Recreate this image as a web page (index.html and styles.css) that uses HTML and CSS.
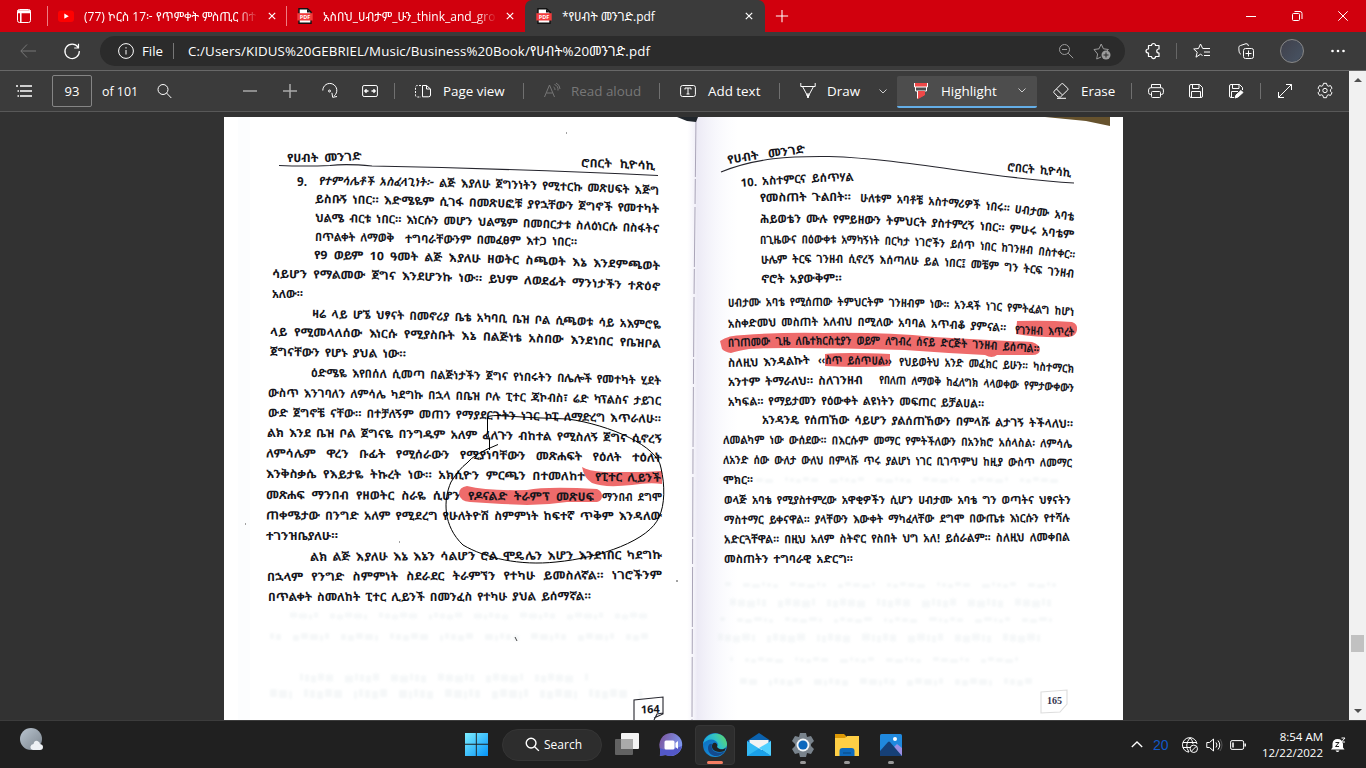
FILE: index.html
```html
<!DOCTYPE html>
<html lang="am">
<head>
<meta charset="utf-8">
<title>*የሀብት መንገድ.pdf</title>
<link rel="stylesheet" href="styles.css">
</head>
<body>
<div class="screen">
<header class="tabs">
  <svg class="ic tabmenu" viewBox="0 0 16 16"><rect x="1.5" y="1.5" width="13" height="13" rx="2"/><path d="M1.5 3h13M1.5 4.6h13M4.8 4v10.5" stroke-width="1.5"/></svg>
  <i class="tabsep"></i>
  <div class="tab first">
    <svg class="fav" viewBox="0 0 16 16"><rect y="2.4" width="16" height="11.6" rx="3.2" fill="#f00"/><path d="M6.3 5.6v5.2L10.8 8.2z" fill="#fff"/></svg>
    <span class="ttl fade">(77) ኮርስ 17፦ የጥምቀት ምስጢር በተ</span>
    <svg class="x" viewBox="0 0 10 10"><path d="M1 1l8 8M9 1L1 9"/></svg>
  </div>
  <i class="tabsep"></i>
  <div class="tab second">
    <svg class="fav" viewBox="0 0 16 16"><path d="M2 .8h8.5L14 4v11.2H2z" fill="#fff" stroke="#111" stroke-width="1.4"/><path d="M10 1v3.5h4z" fill="#111"/><rect x=".3" y="5.2" width="15.4" height="7.3" fill="#f23c3c"/><text x="8" y="11" text-anchor="middle">PDF</text></svg>
    <span class="ttl fade">አስበህ_ሀብታም_ሁን_think_and_gro</span>
    <svg class="x" viewBox="0 0 10 10"><path d="M1 1l8 8M9 1L1 9"/></svg>
  </div>
  <div class="tab active">
    <svg class="fav" viewBox="0 0 16 16"><path d="M2 .8h8.5L14 4v11.2H2z" fill="#fff" stroke="#111" stroke-width="1.4"/><path d="M10 1v3.5h4z" fill="#111"/><rect x=".3" y="5.2" width="15.4" height="7.3" fill="#f23c3c"/><text x="8" y="11" text-anchor="middle">PDF</text></svg>
    <span class="ttl">*የሀብት መንገድ.pdf</span>
    <svg class="x" viewBox="0 0 10 10"><path d="M1 1l8 8M9 1L1 9"/></svg>
  </div>
  <svg class="newtab" viewBox="0 0 16 16"><path d="M8 1v14M1 8h14"/></svg>
  <div class="win">
    <svg class="ic" viewBox="0 0 16 16"><path d="M3 8.5h10"/></svg>
    <svg class="ic" viewBox="0 0 16 16"><rect x="3.5" y="5.5" width="7" height="7" rx="1"/><path d="M5.5 3.5H11a2 2 0 0 1 2 2V11"/></svg>
    <svg class="ic" viewBox="0 0 16 16"><path d="M3.3 3.3l9.4 9.4M12.7 3.3l-9.4 9.4"/></svg>
  </div>
</header>

<nav class="address">
  <svg class="ic dim" viewBox="0 0 16 16"><path d="M7 1.5L.8 8 7 14.500M1 8h15"/></svg>
  <svg class="ic" viewBox="0 0 16 16"><path d="M14 4.200A7.200 7.200 0 1 0 15.300 8M14.500 .8v4.200h-4.300" stroke-width="1.200"/></svg>
  <div class="omni">
    <svg class="ic" viewBox="0 0 16 16"><circle cx="8" cy="8" r="7.400"/><path d="M8 7v4.500M8 4.200v1.300"/></svg>
    <span class="file">File</span><i></i>
    <span class="url">C:/Users/KIDUS%20GEBRIEL/Music/Business%20Book/የሀብት%20መንገድ.pdf</span>
    <svg class="ic dim2" viewBox="0 0 16 16"><circle cx="6.500" cy="6.500" r="5"/><path d="M4 6.500h5M10.200 10.200l5 5"/></svg>
    <svg class="ic dim2 star" viewBox="0 0 18 18"><path d="M8 15l-4.300 2 .9-5L1 7.500l5-.7L8.200 2l2.200 4.800 5 .7-1.500 1.500"/><circle cx="13" cy="13" r="4.500" fill="#9b9b9b" stroke="none"/><path d="M13 10.500v5M10.500 13h5" stroke="#2b2b2b"/></svg>
  </div>
  <svg class="ic puzzle" viewBox="0 0 16 16"><path d="M3.500 2.500h3c0-2.700 4-2.700 4 0h3.500V6c-3 0-3 4 0 4v3.500h-3.500c0 2.700-4 2.700-4 0h-3V10c-3.300 0-3.300-4 0-4z" stroke-width="1.200" stroke-linejoin="round"/></svg>
  <i class="vs"></i>
  <svg class="ic favs" viewBox="0 0 16 16"><path d="M8.500 12.500l-2-1.300-4.500 3 1.200-5L-.3 6l4.800-.5L6.500 1l2.200 4.500H16M10 9h6M10 12.500h6"/></svg>
  <svg class="ic coll" viewBox="0 0 16 16"><rect x="5.500" y="5.500" width="10" height="10" rx="2"/><path d="M10.500 7.500v6M7.500 10.500h6M3 11C1 11 1 8 .8 4.500Q.7 3 2.500 2.500L8 .7Q10 .3 10.500 3"/></svg>
  <span class="avatar"></span>
  <svg class="dots" viewBox="0 0 14 4"><circle cx="1.500" cy="2" r="1.300"/><circle cx="7" cy="2" r="1.300"/><circle cx="12.500" cy="2" r="1.300"/></svg>
</nav>

<main class="viewer">
 <section class="pane">
  <div class="toolbar">
    <svg class="ic c first-icon" viewBox="0 0 16 16"><path d="M4 3h12M4 8h12M4 13h12M0 3h2M1.500 8h1.500M1.500 13h1.500" stroke-width="1.300"/></svg>
    <span class="pagebox">93</span>
    <span class="of">of 101</span>
    <svg class="ic c" viewBox="0 0 16 16"><circle cx="7" cy="6.500" r="5"/><path d="M10.500 10l4.800 5"/></svg>
    <svg class="ic c g minus" viewBox="0 0 16 16"><path d="M1 8h14" stroke-width="1.500"/></svg>
    <svg class="ic c g" viewBox="0 0 16 16"><path d="M1 8h14M8 1v14" stroke-width="1.500"/></svg>
    <svg class="ic c" viewBox="0 0 16 16"><path d="M.8 7.500a7 7 0 1 1 11.500 5.300M15 13.500l-4.300.8-.8-4.500"/><circle cx="7.500" cy="8" r="1"/></svg>
    <svg class="ic c" viewBox="0 0 16 16"><rect x=".6" y="2.500" width="14.800" height="11" rx="1.500"/><path d="M3 8h3.500M9.500 8H13M4.500 6.300L2.800 8l1.700 1.700M11.500 6.300L13.200 8l-1.700 1.700" stroke-width="1.300"/></svg>
    <i></i>
    <svg class="ic c m8" viewBox="0 0 16 16"><path d="M6 2.500H2.500q-2 0-2 2V12q0 2 2 2H6" stroke-dasharray="2 1.300"/><path d="M7.500 2.500h4L15.500 6v6q0 1.800-2 1.800h-6zM11.500 2.500V6h4"/></svg>
    <span>Page view</span><i></i>
    <svg class="ic c off m8" viewBox="0 0 16 16"><path d="M.5 14L5.500 2l5 12M2.500 10h6M9.500 4q2 1 1.500 3M10.500 1.500q4 1.500 3.500 6M12 0q4 2 4 6"/></svg>
    <span class="off">Read aloud</span><i></i>
    <svg class="ic c m8" viewBox="0 0 16 16"><rect x=".6" y="2.500" width="14.800" height="11" rx="2"/><path d="M5 6.500v-1.500h6v1.500M8 5v6M6.500 11h3"/></svg>
    <span>Add text</span><i></i>
    <svg class="ic c m8" viewBox="0 0 16 16"><path d="M.8 0v3.500h14.400V0M2.500 3.500L6.500 11h3l4-7.500M6.500 11L8 14.500 9.500 11"/><path d="M7 12h2l-1 3z" fill="#fff"/></svg>
    <span>Draw</span>
    <svg class="chev m8" viewBox="0 0 8 5"><path d="M.5.5L4 4 7.500.5"/></svg>
    <div class="highlight">
      <svg class="ic c m4" viewBox="0 0 16 16"><path d="M1 0h14v4H1z" fill="#ef4848" stroke="none"/><path d="M1.500 0v4h13V0M2.500 4v4h11V4"/><path d="M4.500 8.500h7v3.500L5 15.500V8.500" fill="#ef4848" stroke="#ef4848"/><path d="M4.500 8v7.500"/></svg>
      <span>Highlight</span>
      <svg class="chev" viewBox="0 0 8 5"><path d="M.5.5L4 4 7.500.5"/></svg>
    </div>
    <svg class="ic c m4" viewBox="0 0 16 16"><path d="M5 14L.8 9.500Q.3 9 1 8.300L8.500.9q.8-.7 1.600 0l4.700 4.500q.7.800 0 1.500L7.500 14zM3.500 6l5.700 5.800M4 15.300h9"/></svg>
    <span>Erase</span><i></i>
    <svg class="ic c m4" viewBox="0 0 16 16"><path d="M3.500 4.500V1.500h9v3M3.500 11.500h-1Q.6 11.500.6 9.500V7q0-2.300 2.300-2.300h10.200Q15.400 4.700 15.400 7v2.500q0 2-2 2h-1"/><rect x="3.500" y="8.500" width="9" height="6" rx="1"/></svg>
    <svg class="ic c" viewBox="0 0 16 16"><path d="M1.500 3q0-1.500 1.500-1.500h8.500l3 3V13q0 1.500-1.500 1.500H3Q1.500 14.500 1.500 13zM4.500 1.500v4h6.500v-4M3.500 14.500V8.500h9v6"/></svg>
    <svg class="ic c" viewBox="0 0 16 16"><path d="M6 14.500H3Q1.500 14.500 1.500 13V3q0-1.500 1.500-1.500h8.500l3 3V7M4.500 1.500v4h6.500v-4M3.500 14.500V8.500H10"/><path d="M7 15l1-3 5-4.500 2 2L10 14z" fill="#fff"/></svg>
    <i></i>
    <svg class="ic c m4" viewBox="0 0 16 16"><path d="M1.500 14.500l13-13M9 1.500h5.500V7M1.500 9v5.500H7"/></svg>
    <svg class="ic c" viewBox="0 0 16 16"><path d="M6.500 .3h3l.6 2.200 1.200.7 2.200-.6 1.500 2.600-1.600 1.600v1.400l1.600 1.600-1.500 2.600-2.200-.6-1.200.7-.6 2.200h-3l-.6-2.200-1.200-.7-2.200.6L1 9.800l1.600-1.600V6.800L1 5.200l1.500-2.600 2.200.6 1.200-.7z" stroke-linejoin="round"/><circle cx="8" cy="7.500" r="2.200"/></svg>
  </div>
  <div class="canvas">
    <svg class="book" id="book" viewBox="224 117 899 603" width="899" height="603">
      <defs>
        <linearGradient id="spine"><stop offset="0" stop-color="#f3f2fa" stop-opacity="0"/><stop offset=".2" stop-color="#eceaf5"/><stop offset="1" stop-color="#f8faff" stop-opacity="0"/></linearGradient>
        <filter id="soft"><feGaussianBlur stdDeviation="1"/></filter>
      </defs>
      <rect x="224" y="117" width="899" height="603" fill="#fff"/>
      <rect x="238" y="117" width="12" height="603" fill="#fcfdfe"/>
      <rect x="687" y="117" width="52" height="603" fill="url(#spine)"/>
      <path d="M696 117L694 300 693 450 692 720" class="fold"/>
      <path d="M677 117h21l-2 5-9-1z" fill="#20262c"/>
      <path d="M1045 117h65v9l-24-5z" fill="#66522d"/>
      <g class="ghost" id="ghost" filter="url(#soft)"></g>
      <g class="marks">
        <path d="M582 467q6 4 22 5h40l18-1v13q-12-2-30 1-28 3-40-2-8-5-10-16z"/>
        <path d="M467 486q20 5 60 4 20-4 70-1 5 2 5 7 0 5-5 6l-30 0q-20 3-40 3l-25-1-32-2q-10-1-11-8 0-7 8-8z"/>
        <path d="M1017 321q30-1 55 1 6 2 5 8-1 6-8 7-28 1-53-3z"/>
        <path d="M720 341q8-6 24-6 40-3 80-2 60-1 110 4 50 3 98 5 8 3 8 7 0 6-8 6-20 0-35 0-5 4-12 0-40-2-80-5-60-2-120-2-25 0-36 1-12 2-18 4-6-1-9-4z"/>
        <path d="M825 354q20-2 65 0v12q-30 2-65 0z"/>
      </g>
      <g class="rules">
        <path d="M279 165.500q26 1 51 0 16-2 42 .5 150 3 286 9.500"/>
        <path d="M721 172C755 158 790 156 829 156.500 910 159 985 178 1074 183"/>
        <path d="M634 720v-20l29-3v17l-9 4M663 713l-6 1-3 6" />
        <path d="M1041 692l26-2v14l-7 8-19 1z" class="pale"/>
      </g>
      <g id="words"></g>
      <text x="641" y="713.500" class="num" transform="rotate(-2 641 714)">164</text>
      <text x="1047" y="704" class="num n2">165</text>
      <path class="dotmark" d="M515 637l2 4M566 133h1M399 542h1M676 581h2M245 524h1"/>
      <path class="lasso" d="M489.500 450L489.500 440 487.500 432V418Q487 415.500 498 415.500 530 418 568 419C610 425 658 446 661 468 665 485 665 505 659 517 650 540 600 558 556 562 520 566 485 558 463 545 443 526 443 500 451 482Q459 469 467 463 474 454 498 444.500"/>
    </svg>
  </div>
 </section>
 <aside class="scroll"><b class="up"></b><b class="thumb"></b><b class="down"></b></aside>
</main>

<footer class="taskbar">
  <svg class="weather" viewBox="0 0 24 24"><defs><linearGradient id="moon" x2="1" y2="1"><stop stop-color="#b9c4cf"/><stop offset="1" stop-color="#7d868f"/></linearGradient></defs><circle cx="11" cy="11" r="11" fill="url(#moon)"/><path d="M13 22q-3-1-2.500-3.500Q11 16 13.500 16q1-4 4-3 2.500 1 2.500 3 3 .5 3 3 0 3-3 3z" fill="#eef1f5"/></svg>
  <div class="apps">
    <svg class="win11" viewBox="0 0 24 24"><defs><linearGradient id="w" x2="1" y2="1"><stop stop-color="#7deeff"/><stop offset="1" stop-color="#0594f8"/></linearGradient></defs><path d="M0 0h11.300v11.300H0zM12.300 0H24v11.300H12.300zM0 12.300h11.300V24H0zM12.300 12.300H24V24H12.300z" fill="url(#w)"/></svg>
    <div class="search"><svg viewBox="0 0 16 16"><circle cx="6.500" cy="6.500" r="5.200"/><path d="M10.300 10.300l4.500 4.500"/></svg>Search</div>
    <div class="app"><svg viewBox="0 0 24 24"><rect x="6" width="18" height="16" rx="1" fill="#f4f4f4"/><rect y="6" width="18" height="16" rx="1" fill="#626262"/><path d="M6 6h12v10H6z" fill="#aaa"/></svg></div>
    <div class="app"><svg viewBox="0 0 24 24"><defs><linearGradient id="ch" x1="0" x2="1" y2=".4"><stop stop-color="#7b5299"/><stop offset="1" stop-color="#7d96ee"/></linearGradient></defs><path d="M12 0a11.500 11.500 0 1 1-5 22L.8 23l.6-6A12 12 0 0 1 12 0z" fill="url(#ch)"/><path d="M1 15q8 4 22-2-2 9-11 10-4 0-6-1l-5 1z" fill="#5358c8"/><rect x="5.500" y="7.500" width="10" height="9" rx="1.500" fill="#fff"/><path d="M16.500 10l2.500-2v8l-2.500-2z" fill="#fff"/></svg></div>
    <div class="app on"><svg viewBox="0 0 24 24"><defs><linearGradient id="e1" y1=".4" y2="0" x2="1"><stop stop-color="#18a8e6"/><stop offset=".5" stop-color="#34c4c0"/><stop offset="1" stop-color="#69dc53"/></linearGradient><linearGradient id="e2" y2="1" x2=".6"><stop stop-color="#0c65b5"/><stop offset="1" stop-color="#1592df"/></linearGradient></defs><circle cx="12" cy="12" r="12" fill="url(#e2)"/><path d="M0 11C2-2 22-4 24 11c0 5-6 6-9 4-2-1 0-2 0-4-2-6-11-6-15 0z" fill="url(#e1)"/><path d="M9 11c-2 7 5 11 13 7-5 8-17 6-17-3 0-3 2-5 4-4z" fill="#134a8e"/><path d="M9.500 11c2-3 6 0 4.500 3 2 3 7 3 9 .5l-1.500 3.500C13 21 7 16 9.500 11z" fill="#202324"/></svg><u></u></div>
    <div class="app"><svg viewBox="0 0 24 24"><path d="M0 8l12-8 12 8v14H0z" fill="#0b62ae"/><path d="M2.500 7h19v10h-19z" fill="#f3f3f3"/><path d="M0 8l12 7.500L24 23H0z" fill="#35baf4"/><path d="M24 8v15L12 15z" fill="#50d0ff"/><path d="M0 23l12-7.500L24 23z" fill="#1aa0e9"/></svg></div>
    <div class="app"><svg viewBox="0 0 24 24"><path d="M9 0h6l1 4 4-1 3 5-3 3v2l3 3-3 5-4-1-1 4H9l-1-4-4 1-3-5 3-3v-2L1 8l3-5 4 1z" fill="#79838c"/><circle cx="12" cy="12" r="6.500" fill="#f2f5f7"/><circle cx="12" cy="12" r="4.600" fill="#0a67bd"/></svg><s></s></div>
    <div class="app"><svg viewBox="0 0 24 24"><path d="M0 1h9l2 2v4H0z" fill="#dc9805"/><path d="M0 5h10l2-2h12v20H0z" fill="#ffcf45"/><path d="M4.500 23v-5q0-3 3-3h9q3 0 3 3v5z" fill="#0e6abd"/><path d="M8 20h8" stroke="#08477f"/></svg><s></s></div>
    <div class="app"><svg viewBox="0 0 24 24"><rect x="1" y="1" width="22" height="22" rx="1.500" fill="#2089de"/><path d="M14 15l4-4 5 4v8h-8z" fill="#9a8fe3"/><path d="M1 18L9 9q1-1 2 0l12 14H1z" fill="#164077"/><circle cx="16" cy="6" r="2" fill="#fff"/></svg><s></s></div>
  </div>
  <div class="tray">
    <svg class="ic up" viewBox="0 0 12 7"><path d="M.8 6L6 1l5.200 5" stroke-width="1.300"/></svg>
    <span class="temp">20</span>
    <svg class="ic globe" viewBox="0 0 16 16"><path d="M15 7A7.300 7.300 0 1 0 7 15.200M1 5.500h13.500M.8 10.500H8M7 15Q2 8 8 .8 10.500 3 11 7"/><circle cx="11.800" cy="11.800" r="3.700"/><path d="M9.300 14.300l5-5"/></svg>
    <svg class="ic vol" viewBox="0 0 16 16"><path d="M.8 5.500H3.500L7.500 2v12l-4-3.500H.8zM10 5.500q2 2.500 0 5M12 3.500q3.500 4.500 0 9"/><path d="M14 2q4 6 0 12" stroke="#555"/></svg>
    <svg class="ic bat" viewBox="0 0 16 10"><rect x=".6" y=".6" width="13" height="8.800" rx="1.500"/><path d="M15.200 3.500v3M3 2.500v5" stroke-width="1.500"/></svg>
    <div class="clock"><span>8:54 AM</span><span>12/22/2022</span></div>
    <svg class="bell" viewBox="0 0 16 16"><path d="M1 12.500l1.500-2V6.500Q3 2 7.500 2q5 0 5.500 5v3.500l1.500 2zM5.500 13.500h4q-2 3-4 0z" fill="#fff"/><path d="M5.500 5.500h3.500l-3.500 4H9" stroke="#202020" fill="none"/><path d="M10.500 0h6v6h-4z" fill="#202020"/><path d="M11.500 1h3.500l-3.500 4H15" stroke="#fff" fill="none"/></svg>
  </div>
</footer>
</div>
<script src="book.js"></script>
</body>
</html>
```

FILE: styles.css
```css
* { box-sizing: border-box; }
body { margin: 0; overflow: hidden; font-family: "Open Sans", "Noto Sans", "Noto Sans Ethiopic", sans-serif; color: #fff; background: #323232; }
.screen { width: 1366px; height: 768px; display: flex; flex-direction: column; }
svg { display: block; flex: none; }
.ic { width: 16px; height: 16px; fill: none; stroke: #fff; stroke-width: 1; overflow: visible; }

.tabs { height: 32px; background: #d1000d; display: flex; align-items: center; font-size: 12px; }
.tabmenu { width: 16px; margin: 0 15px 0 16px; }
.tabsep { width: 1px; height: 20px; background: #ee7c82; }
.tab { display: flex; align-items: center; height: 32px; }
.first { width: 238px; padding-left: 10px; }
.second { width: 238px; padding-left: 10px; }
.active { width: 240px; background: #3b3b3b; border-radius: 7px 7px 0 0; padding-left: 11px; }
.fav { width: 16px; height: 16px; }
.fav text { font: 700 5.5px "Open Sans", sans-serif; fill: #fff; }
.ttl { width: 174px; margin-left: 10px; white-space: nowrap; }
.fade { -webkit-mask-image: linear-gradient(90deg, #000 88%, transparent 100%); }
.x { width: 8px; height: 8px; margin-left: 10px; overflow: visible; stroke: #fff; stroke-width: 1.5; fill: none; }
.second .x { margin-left: 9px; }
.active .ttl { width: 173px; }
.newtab { width: 14px; height: 14px; margin-left: 10px; stroke: #fff; stroke-width: 1.2; }
.win { margin-left: auto; display: flex; gap: 30px; padding-right: 15px; }

.address { height: 39px; background: #3b3b3b; border-bottom: 1px solid #686868; display: flex; align-items: center; padding-left: 20px; }
.dim { stroke: #777; }
.address > .dim + .ic { margin-left: 28px; }
.omni { width: 1025px; height: 30px; border-radius: 15px; background: #2b2b2b; display: flex; align-items: center; margin-left: 20px; padding-left: 18px; font-size: 13.3px; }
.omni .file { width: 31px; margin-left: 8px; }
.omni i { width: 1px; height: 16px; background: #777; margin-right: 14px; }
.url { width: 862px; white-space: nowrap; letter-spacing: .11px; }
.dim2 { stroke: #9b9b9b; margin-left: 8px; }
.dim2.star { width: 18px; height: 18px; margin-left: 19px; }
.puzzle { margin-left: 20px; }
.vs { width: 1px; height: 16px; background: #666; margin: 0 17px 0 15px; }
.coll { margin-left: 28px; }
.avatar { width: 24px; height: 24px; border-radius: 50%; border: 1px solid #888; background: linear-gradient(130deg, #40404a, #46505f 80%, #271e20); margin-left: 26px; }
.dots { width: 14px; height: 4px; fill: #fff; margin-left: 27px; }

.viewer { height: 649px; display: flex; }
.pane { width: 1349px; }
.toolbar { height: 41px; background: #3b3b3b; border-bottom: 1px solid #585858; display: grid; align-items: center; font-size: 13.4px; white-space: nowrap;
  grid-template-columns: 52px 40px 52px 40px 86px 40px 40px 40px 5px 48px 65px 16px 47px 73px 16px 48px 56px 16px 47px 34px 36px 140px 44px 36px 15px 44px 40px 40px 5px 44px 40px; }
.c { justify-self: center; }
.m8 { margin-left: 8px; }
.m4 { margin-left: 4px; }
.first-icon { margin-right: 4px; }
.g { stroke: #aaa; }
.minus { margin-left: 46px; }
.toolbar i { width: 1px; height: 16px; background: #707070; justify-self: end; }
.pagebox { height: 32px; border: 1px solid #858585; border-radius: 2px; line-height: 30px; text-align: center; font-size: 13px; }
.of { padding-left: 10px; font-size: 12.4px; }
svg.off { stroke: #777; } span.off { color: #777; }
.chev { width: 8px; height: 5px; stroke: #ccc; fill: none; overflow: visible; justify-self: center; }
.highlight { height: 32px; margin-top: 1px; background: #4d4d4d; border-bottom: 2px solid #64aee7; border-radius: 2px; display: grid; grid-template-columns: 44px 66px 30px; align-items: center; }
.canvas { height: 608px; padding: 5px 0 0 224px; background: #323232; }
.scroll { width: 17px; background: #f1f1f1; display: flex; flex-direction: column; align-items: center; }
.scroll .up, .scroll .down { border: 4px solid transparent; border-top: 0; border-bottom: 4px solid #505050; margin-top: 7px; }
.scroll .thumb { width: 13px; height: 17px; background: #c1c1c1; margin-top: 553px; }
.scroll .down { border-top: 4px solid #505050; border-bottom: 0; margin-top: 57px; }

.book { overflow: hidden; }
.word { font-family: "Noto Sans Ethiopic", "Noto Serif Ethiopic", "Abyssinica SIL", "Liberation Sans", sans-serif; font-weight: 700; fill: #15151b; }
.italic { font-style: italic; }
.fold { fill: none; stroke: #aaa5b8; stroke-width: 1; stroke-dasharray: 60 2 25 3; }
.ghost { stroke: #e9eef0; stroke-width: 7; fill: none; opacity: .45; }
.marks { fill: #ee6b6b; }
.rules { fill: none; stroke: #25252d; stroke-width: 1.1; }
.pale { stroke: #ddd; }
.num { font: 700 11px "Open Sans", sans-serif; fill: #17171c; }
.n2 { font-family: "Liberation Serif", serif; font-size: 10px; fill: #34344e; }
.dotmark { stroke: #444; stroke-width: 1; }
.lasso { fill: none; stroke: #000; stroke-width: 1; }

.taskbar { height: 48px; background: #202020; border-top: 1px solid #3c3c3c; display: flex; align-items: center; padding-left: 20px; }
.weather { width: 24px; height: 24px; margin-top: -9px; }
.apps { display: flex; align-items: center; margin-left: 421px; }
.win11 { width: 23px; height: 23px; }
.search { width: 100px; height: 32px; margin: 0 5px 0 14px; border-radius: 16px; background: #2d2d2d; border: 1px solid #353535; display: flex; align-items: center; gap: 4px; padding-left: 22px; font-size: 12px; }
.search svg { width: 15px; height: 15px; fill: none; stroke: #fff; stroke-width: 1.5; }
.app { width: 40px; height: 40px; margin-right: 4px; display: grid; place-items: center; border-radius: 4px; position: relative; }
.app svg { width: 24px; height: 24px; }
.on { background: #2d2d2d; border: 1px solid #363636; }
.app u { position: absolute; bottom: 0; width: 16px; height: 3px; border-radius: 2px; background: #f57e63; }
.app s { position: absolute; bottom: 1px; width: 6px; height: 3px; border-radius: 2px; background: #999; }
.tray { margin-left: auto; display: flex; align-items: center; padding-right: 20px; }
.tray .up { width: 12px; height: 7px; }
.temp { width: 29px; margin-left: 10px; font: 14px "Liberation Sans", sans-serif; color: #1159c7; }
.vol { margin-left: 8px; }
.bat { width: 16px; height: 10px; margin-left: 8px; }
.clock { width: 77px; display: flex; flex-direction: column; text-align: right; font-size: 11.5px; line-height: 16px; }
.bell { width: 16px; height: 16px; margin-left: 7px; }
```

FILE: book.js
```js
// Each line: left x, right x, baseline at left, middle and right, text, style
const lines = [
  [287,362,162,162,160,"የሀብት መንገድ"],
  [581,655,167,168,170,"ሮበርት ኪዮሳኪ"],
  [297,307,186,186,186,"9.","plain"],
  [318,433,185,185.5,186.5,"የተምሳሌቶች አስፈላጊነት፦","italic"],
  [439,659,187,190,195,"ልጅ እያለሁ ጀግንነትን የሚተርኩ መጽሀፍት እጅግ"],
  [315,659,203,207,213,"ይስቡኝ ነበር። እድሜዬም ሲገፋ በመጽሀፎቹ ያየኋቸውን ጀግኖች የመተካት"],
  [315,659,222,226,233,"ህልሜ ብርቱ ነበር። እነርሱን መሆን ህልሜም በመበርታቱ ስለዕነርሱ በስፋትና"],
  [315,394,241,241.5,242,"በጥልቀት ለማወቅ"],
  [405,577,243,244,246,"ተግባራቸውንም በመፈፀም እተጋ ነበር።"],
  [314,660,259,263,270,"የ9 ወይም 10 ዓመት ልጅ እያለሁ ዘወትር ስጫወት እኔ እንደምጫወት"],
  [272,660,278,282,291,"ሳይሆን የማልመው ጀግና እንደሆንኩ ነው። ይህም ለወደፊት ማንነታችን ተጽዕኖ"],
  [272,303,298,298,298,"አለው።"],
  [312,661,318,322,329,"ዛሬ ላይ ሆኜ ህፃናት በመኖሪያ ቤቴ አካባቢ ቤዝ ቦል ሲጫወቱ ሳይ አእምሮዬ"],
  [270,661,336,340,348,"ላይ የሚመላለሰው እነርሱ የሚያስቡት እኔ በልጅነቴ አስበው እንደነበር የቤዝቦል"],
  [270,406,356,357,358,"ጀግናቸውን የሆኑ ያህል ነው።"],
  [311,661,377,380,385,"ዕድሜዬ እየበሰለ ሲመጣ በልጅነታችን ጀግና የነበሩትን በሌሎች የመተካት ሂደት"],
  [268,661,397,400,405,"ውስጥ እንገባለን ለምሳሌ ካደግኩ በኋላ በቤዝ ቦሉ ፒተር ጃኮብስ፣ ሬድ ካፕልስና ታይገር"],
  [268,661,417,419,423,"ውድ ጀግኖቼ ናቸው። በተቻለኝም መጠን የማያደርጉትን ነገር ኮፒ ለማድረግ እጥራለሁ።"],
  [267,662,437,439,443,"ልክ እንደ ቤዝ ቦል ጀግናዬ በንግዱም አለም ፈለጉን ብከተል የሚስለኝ ጀግና ሲኖረኝ"],
  [266,662,457.5,459,462,"ለምሳሌም ዋረን ቡፊት የሚሰራውን የሚያነባቸውን መጽሐፍት የዕለት ተዕለት"],
  [266,585,478,479,480.5,"እንቅስቃሴ የእይታዬ ትኩረት ነው። አክሲዮን ምርጫን በተመለከተ"],
  [595,661,481,481.5,482,"የፒተር ሊይንች"],
  [266,460,499,499.5,500,"መጽሐፍ ማንበብ የዘወትር ስራዬ ሲሆን"],
  [468,594,500,500.5,501,"የዶናልድ ትራምፕ መጽሀፍ"],
  [602,662,501,501,501,"ማንበብ ደግሞ"],
  [266,662,519.5,520,520,"ጠቀሜታው በንግድ አለም የሚደረግ የሁለትዮሽ ስምምነት ከፍተኛ ጥቅም እንዳለው"],
  [266,338,540,540,540,"ተገንዝቤያለሁ።"],
  [310,662,561,560,559,"ልክ ልጅ እያለሁ እኔ እኔን ሳልሆን ሮል ሞዴሌን እሆን እንደነበር ካደግኩ"],
  [267,662,581,580,579,"በኋላም የንግድ ስምምነት ስደራደር ትራምኘን የተካሁ ይመስለኛል። ነገሮችንም"],
  [268,591,601,601,600,"በጥልቀት ስመለከት ፒተር ሊይንች በመንፈስ የተካሁ ያህል ይሰማኛል።"],
  [728,806,164,158,153,"የሀብት መንገድ"],
  [1007,1071,171,174,177,"ሮበርት ኪዮሳኪ"],
  [741,854,187,183,181,"10. አስተምርና ይሰጥሃል"],
  [760,851,202,201,201,"የመስጠት ጉልበት።"],
  [860,1074,202,208,221,"ሁለቱም አባቶቼ አስተማሪዎች ነበሩ። ሀብታሙ አባቴ"],
  [760,1074,223,226,239,"ሕይወቴን ሙሉ የምይዘውን ትምህርት ያስተምረኝ ነበር። ምሁሩ አባቴም"],
  [760,1075,244,246,259,"በጊዜውና በዕውቀቱ አማካኝነት በርካታ ነገሮችን ይሰጥ ነበር ከገንዘብ በስተቀር።"],
  [761,1074,264,265,278,"ሁሌም ትርፍ ገንዘብ ሲኖረኝ እሰጣለሁ ይል ነበር፤ መቼም ግን ትርፍ ገንዘብ"],
  [761,842,283,283,282,"ኖሮት አያውቅም።"],
  [728,1074,307,307,316,"ሀብታሙ አባቴ የሚሰጠው ትምህርትም ገንዘብም ነው። አንዳች ነገር የምትፈልግ ከሆነ"],
  [728,1006,328,326,332,"አስቀድመህ መስጠት አለብህ በሚለው አባባል አጥብቆ ያምናል።"],
  [1015,1074,334,335,336,"የገንዘብ እጥረት"],
  [728,1039,347,345,353,"በገጠመው ጊዜ ለቤተክርስቲያን ወይም ለግብረ ሰናይ ድርጅት ገንዘብ ይሰጣል።"],
  [728,810,367,366,364,"ስለዚህ እንዳልኩት"],
  [818,892,364,364.5,365,"‹‹ስጥ ይሰጥሀል››"],
  [899,1074,366,368,373,"የህይወትህ አንድ መፈክር ይሁን። ካስተማርክ"],
  [728,863,386,385,384,"አንተም ትማራለህ። ስለገንዘብ"],
  [879,1074,384,387,392,"የበለጠ ለማወቅ ከፈለግክ ላላወቀው የምታውቀውን"],
  [728,984,406,405,408,"አካፍል። የማይታመን የዕውቀት ልዩነትን መፍጠር ይቻልሀል።"],
  [762,1073,424,425,428,"አንዳንዴ የሰጠኸው ሳይሆን ያልሰጠኸውን በምላሹ ልታገኝ ትችላለህ።"],
  [723,1072,444,445,448,"ለመልካም ነው ውሰደው። በእርሱም መማር የምትችለውን በአንክሮ አሰላስል፡ ለምሳሌ"],
  [723,1072,464,465,467,"ለአንድ ሰው ውለታ ውለህ በምላሹ ጥሩ ያልሆነ ነገር ቢገጥምህ ከዚያ ውስጥ ለመማር"],
  [723,753,484,484,484,"ሞክር።"],
  [724,1071,504,504,504,"ወላጅ አባቴ የሚያስተምረው አዋቂዎችን ሲሆን ሀብታሙ አባቴ ግን ወጣትና ህፃናትን"],
  [724,1070,524,523,522,"ማስተማር ይቀናዋል። ያላቸውን እውቀት ማካፈላቸው ደግሞ በውጤቱ እነርሱን የተሻሉ"],
  [724,1070,543.5,542.5,541,"አድርጓቸዋል። በዚህ አለም ስትኖር የስበት ህግ አለ! ይሰራልም። ስለዚህ ለመቀበል"],
  [724,853,563,563,563,"መስጠትን ተግባራዊ አድርግ።"]
];

const NS = "http://www.w3.org/2000/svg";
const layer = document.getElementById("words");

for (const [x0, x1, ya, yb, yc, text, style] of lines) {
  const words = text.split(" ").map(w => {
    const t = document.createElementNS(NS, "text");
    t.textContent = w;
    t.setAttribute("class", "word" + (style ? " " + style : ""));
    t.setAttribute("font-size", "11.5");
    layer.appendChild(t);
    return t;
  });
  const widths = words.map(t => t.getComputedTextLength());
  const total = widths.reduce((a, b) => a + b, 0);
  const gaps = words.length - 1;
  const span = x1 - x0;
  const k = Math.min(1.08, (span - gaps * 5) / total);
  const gap = gaps ? (span - total * k) / gaps : 0;
  // quadratic baseline through the three given heights
  const base = x => {
    const u = (x - x0) / span;
    return ya * (1 - u) * (1 - 2 * u) + 4 * yb * u * (1 - u) + yc * u * (2 * u - 1);
  };
  let x = x0;
  words.forEach((t, i) => {
    const w = widths[i] * k;
    const a = Math.atan2(base(x + w) - base(x), w) * 180 / Math.PI;
    t.setAttribute("transform", `translate(${x} ${base(x)}) rotate(${a}) scale(${k} 1)`);
    x += w + gap;
  });
}

// print showing through from the reverse side
const ghost = document.getElementById("ghost");
for (const [x, y, w] of [[290,616,350],[270,637,380],[300,678,290],[270,694,370],[725,585,330],[730,603,330],[720,620,330],[718,638,330],[730,660,300],[740,682,290],[720,480,350]]) {
  for (let i = 0, px = x; px < x + w; i++) {
    const n = 3 + (i * 7 + y) % 6;
    const p = document.createElementNS(NS, "path");
    p.setAttribute("d", `M${px} ${y + (i % 3) - 1}h${n}`);
    p.setAttribute("stroke-width", 4 + (i * 5 + y) % 5);
    ghost.appendChild(p);
    px += n + ((i * 3 + y) % 5 === 0 ? 12 : 2);
  }
}
```
